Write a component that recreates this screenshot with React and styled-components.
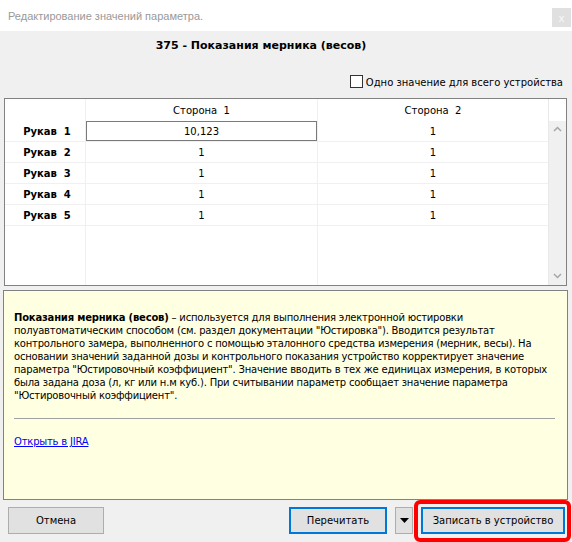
import React from 'react';
import styled, { createGlobalStyle } from 'styled-components';

const GlobalStyle = createGlobalStyle`
    html, body {
        margin: 0;
        padding: 0;
        background: #f0f0f0;
    }
    body {
        font-family: "DejaVu Sans", Tahoma, sans-serif;
        font-size: 10px;
        color: #000;
    }
`;

const Window = styled.div`
    width: 572px;
    height: 542px;
    display: flex;
    flex-direction: column;
    background: #f0f0f0;
    overflow: hidden;
`;
const TitleBar = styled.div`
    height: 31px;
    flex: none;
    display: flex;
    align-items: center;
    justify-content: space-between;
    background: #fff;
    padding-left: 8px;
    padding-right: 1px;
    box-sizing: border-box;
`;
const TitleText = styled.span`
    font-family: "Liberation Sans", Arial, sans-serif;
    font-size: 11px;
    color: #999;
`;
const CloseBtn = styled.div`
    width: 19px;
    height: 19px;
    background: #e0e0e0;
    color: #f8f8f8;
    font-family: "Liberation Sans", Arial, sans-serif;
    font-size: 11px;
    display: flex;
    align-items: center;
    justify-content: center;
    margin-top: 4px;
`;
const Heading = styled.div`
    text-align: center;
    font-weight: bold;
    font-size: 11px;
    padding: 8px 50px 0 0;
    height: 28px;
    box-sizing: border-box;
`;
const CheckRow = styled.label`
    display: flex;
    justify-content: flex-end;
    align-items: flex-end;
    gap: 3px;
    padding-right: 9px;
    padding-bottom: 10px;
    height: 40px;
    box-sizing: border-box;
`;
const CheckBox = styled.span`
    width: 11px;
    height: 11px;
    border: 1px solid #333;
    background: #fff;
    display: inline-block;
    margin-bottom: 0;
`;
const Frame = styled.div`
    margin: 0 5px 0 4px;
    height: 188px;
    flex: none;
    border: 1px solid #828282;
    background: #fff;
    display: flex;
    box-sizing: border-box;
`;
const Grid = styled.div`
    flex: 1;
    display: grid;
    grid-template-columns: 81px 232px 231px;
    grid-template-rows: 22px repeat(5, 21px) 1fr;
`;
const Cell = styled.div`
    display: flex;
    align-items: center;
    justify-content: center;
    border-right: 1px solid ${p => p.last ? '#e8e8e8' : '#f0f0f0'};
    border-bottom: ${p => p.noLine ? 'none' : '1px solid #f0f0f0'};
    font-weight: ${p => p.bold ? 'bold' : 'normal'};
    box-shadow: ${p => p.selected ? 'inset 0 0 0 1px #7a7a7a' : 'none'};
    box-sizing: border-box;
    padding-top: ${p => p.head ? '1px' : '0'};
    padding-left: ${p => p.bold ? '4px' : '0'};
    white-space: nowrap;
`;
const ScrollCol = styled.div`
    width: 17px;
    display: flex;
    flex-direction: column;
`;
const ScrollTop = styled.div`
    height: 22px;
    flex: none;
`;
const ScrollTrack = styled.div`
    flex: 1;
    background: #f0f0f0;
    display: flex;
    flex-direction: column;
    justify-content: space-between;
    align-items: center;
    padding: 5px 0 6px;
`;
const InfoPanel = styled.div`
    margin: 4px 4px 0 3px;
    height: 210px;
    flex: none;
    box-sizing: border-box;
    border: 1px solid #828282;
    background: #ffffe1;
    padding: 20px 12px 0 10px;
    line-height: 13px;
    white-space: nowrap;
    letter-spacing: -0.2px;
`;
const Divider = styled.div`
    height: 1px;
    background: #a0a0a0;
    margin: 16px 0 16px;
`;
const Link = styled.a`
    color: #0000ff;
    text-decoration: underline;
    cursor: pointer;
`;
const Footer = styled.div`
    flex: 1;
    display: flex;
    align-items: flex-start;
    padding: 0 1px 0 8px;
`;
const Button = styled.button`
    height: 27px;
    width: ${p => p.w}px;
    box-sizing: border-box;
    background: #e1e1e1;
    border: ${p => p.primary ? '2px solid #0078d7' : '1px solid #adadad'};
    font-family: inherit;
    font-size: 10px;
    color: #000;
    padding: 0;
    margin-top: 7px;
    display: flex;
    align-items: center;
    justify-content: center;
`;
const Spacer = styled.div`
    flex: 1;
`;
const DropBtn = styled(Button)`
    margin-left: 8px;
`;
const Highlight = styled.div`
    margin-left: 1px;
    border: 4px solid #ff0000;
    border-radius: 6px;
    padding: 3px 2px 4px 3px;
    height: 42px;
    box-sizing: border-box;
    & > button {
        margin-top: 0;
    }
`;

const Chevron = ({ up }) => (
    <svg width="9" height="6" viewBox="0 0 9 6">
        <polyline
            points={up ? '1,5 4.5,1.5 8,5' : '1,1 4.5,4.5 8,1'}
            fill="none"
            stroke="#a6a6a6"
            strokeWidth="1.5"
        />
    </svg>
);

const rows = [
    { name: 'Рукав 1', a: '10,123', b: '1' },
    { name: 'Рукав 2', a: '1', b: '1' },
    { name: 'Рукав 3', a: '1', b: '1' },
    { name: 'Рукав 4', a: '1', b: '1' },
    { name: 'Рукав 5', a: '1', b: '1' },
];

const App = () => {
    return (
        <Window>
            <GlobalStyle />
            <TitleBar>
                <TitleText>Редактирование значений параметра.</TitleText>
                <CloseBtn>x</CloseBtn>
            </TitleBar>
            <Heading>375 - Показания мерника (весов)</Heading>
            <CheckRow>
                <CheckBox />
                <span>Одно значение для всего устройства</span>
            </CheckRow>
            <Frame>
                <Grid>
                    <Cell noLine />
                    <Cell noLine head>Сторона&nbsp; 1</Cell>
                    <Cell noLine head last>Сторона&nbsp; 2</Cell>
                    {rows.map((r, i) => (
                        <React.Fragment key={r.name}>
                            <Cell bold>{r.name.replace(' ', '\u00a0 ')}</Cell>
                            <Cell selected={i === 0}>{r.a}</Cell>
                            <Cell last>{r.b}</Cell>
                        </React.Fragment>
                    ))}
                    <Cell noLine />
                    <Cell noLine />
                    <Cell noLine last />
                </Grid>
                <ScrollCol>
                    <ScrollTop />
                    <ScrollTrack>
                        <Chevron up />
                        <Chevron />
                    </ScrollTrack>
                </ScrollCol>
            </Frame>
            <InfoPanel>
                <b>Показания мерника (весов)</b> – используется для выполнения электронной юстировки<br />
                полуавтоматическим способом (см. раздел документации "Юстировка"). Вводится результат<br />
                контрольного замера, выполненного с помощью эталонного средства измерения (мерник, весы). На<br />
                основании значений заданной дозы и контрольного показания устройство корректирует значение<br />
                параметра "Юстировочный коэффициент". Значение вводить в тех же единицах измерения, в которых<br />
                была задана доза (л, кг или н.м куб.). При считывании параметр сообщает значение параметра<br />
                "Юстировочный коэффициент".
                <Divider />
                <Link>Открыть в JIRA</Link>
            </InfoPanel>
            <Footer>
                <Button w={96}>Отмена</Button>
                <Spacer />
                <Button w={98} primary>Перечитать</Button>
                <DropBtn w={18}>
                    <svg width="9" height="5" viewBox="0 0 9 5">
                        <polygon points="0,0 9,0 4.5,5" fill="#000" />
                    </svg>
                </DropBtn>
                <Highlight>
                    <Button w={144} primary>Записать в устройство</Button>
                </Highlight>
            </Footer>
        </Window>
    );
};

export default App;
